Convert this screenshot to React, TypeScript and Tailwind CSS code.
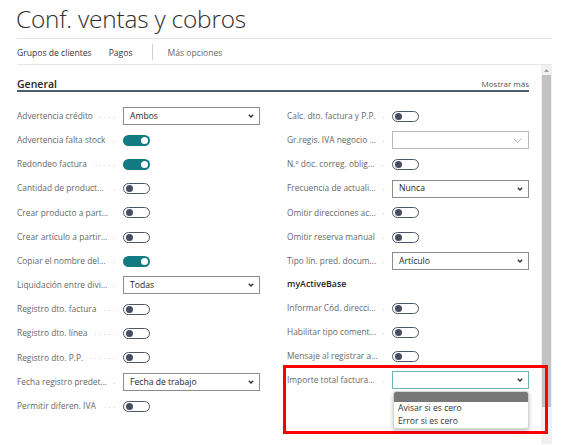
import React from "react";

type RowItem =
  | { kind: "toggle"; label: string; on?: boolean }
  | { kind: "select"; label: string; value: string; thin?: boolean }
  | { kind: "heading"; label: string }
  | { kind: "focus"; label: string };

const leftRows: RowItem[] = [
  { kind: "select", label: "Advertencia crédito", value: "Ambos" },
  { kind: "toggle", label: "Advertencia falta stock", on: true },
  { kind: "toggle", label: "Redondeo factura", on: true },
  { kind: "toggle", label: "Cantidad de product..." },
  { kind: "toggle", label: "Crear producto a part..." },
  { kind: "toggle", label: "Crear artículo a partir..." },
  { kind: "toggle", label: "Copiar el nombre del...", on: true },
  { kind: "select", label: "Liquidación entre divi...", value: "Todas" },
  { kind: "toggle", label: "Registro dto. factura" },
  { kind: "toggle", label: "Registro dto. línea" },
  { kind: "toggle", label: "Registro dto. P.P." },
  { kind: "select", label: "Fecha registro predet...", value: "Fecha de trabajo" },
  { kind: "toggle", label: "Permitir diferen. IVA" },
];

const rightRows: RowItem[] = [
  { kind: "toggle", label: "Calc. dto. factura y P.P." },
  { kind: "select", label: "Gr.regis. IVA negocio ...", value: "", thin: true },
  { kind: "toggle", label: "N.º doc. correg. oblig..." },
  { kind: "select", label: "Frecuencia de actuali...", value: "Nunca" },
  { kind: "toggle", label: "Omitir direcciones ac..." },
  { kind: "toggle", label: "Omitir reserva manual" },
  { kind: "select", label: "Tipo lín. pred. docum...", value: "Artículo" },
  { kind: "heading", label: "myActiveBase" },
  { kind: "toggle", label: "Informar Cód. direcci..." },
  { kind: "toggle", label: "Habilitar tipo coment..." },
  { kind: "toggle", label: "Mensaje al registrar a..." },
  { kind: "focus", label: "Importe total factura..." },
];

function Chevron({ thin }: { thin?: boolean }) {
  if (thin) {
    return (
      <svg width="9" height="5" viewBox="0 0 9 5" fill="none">
        <path d="M0.5 0.5 L4.5 4.5 L8.5 0.5" stroke="#a3a3a3" strokeWidth="0.8" />
      </svg>
    );
  }
  return (
    <svg width="6" height="4" viewBox="0 0 6 4" fill="none">
      <path d="M0.8 0.8 L3 3 L5.2 0.8" stroke="#303030" strokeWidth="1.4" />
    </svg>
  );
}

function Toggle({ on }: { on?: boolean }) {
  if (on) {
    return (
      <div className="flex h-[11px] w-[27px] items-center justify-end rounded-full bg-[#127b82] pr-[2px]">
        <div className="h-[7px] w-[7px] rounded-full bg-white" />
      </div>
    );
  }
  return (
    <div className="flex h-[11px] w-[27px] items-center rounded-full border border-[#4d5666] bg-white pl-[1.5px]">
      <div className="h-[7px] w-[7px] rounded-full bg-[#464f61]" />
    </div>
  );
}

function Select({ value, thin }: { value: string; thin?: boolean }) {
  return (
    <div
      className={`flex h-[18px] items-center justify-between border bg-white pl-[6px] text-[8.6px] text-[#262626] ${
        thin ? "border-[#b9b9b9] pr-[6px]" : "border-[#8c8c8c] pr-[5px]"
      }`}
    >
      <span>{value}</span>
      <Chevron thin={thin} />
    </div>
  );
}

function FocusSelect() {
  return (
    <div className="relative">
      <div className="flex h-[18px] items-center justify-end border border-[#6db3b9] bg-white pr-[5px]">
        <Chevron />
      </div>
      <div className="absolute left-[1px] right-0 top-[20px] z-10 overflow-hidden rounded-[3px] border border-[#d4d4d4] bg-white pb-[1px] shadow-[0_2px_4px_rgba(0,0,0,0.25)]">
        <div className="h-[10px] bg-[#777777]" />
        <div className="px-[4px] text-[8.6px] leading-[12.5px] text-[#333333]">Avisar si es cero</div>
        <div className="px-[4px] text-[8.6px] leading-[12.5px] text-[#333333]">Error si es cero</div>
      </div>
    </div>
  );
}

function Row({ item, h = "h-[24.2px]" }: { item: RowItem; h?: string }) {
  if (item.kind === "heading") {
    return (
      <div className={`flex ${h} items-center text-[8.8px] font-semibold text-[#262626]`}>
        {item.label}
      </div>
    );
  }
  return (
    <div className={`flex ${h} items-center`}>
      <span className="whitespace-nowrap text-[8.4px] text-[#686868]">{item.label}</span>
      <span className="ml-[6px] mr-[5px] h-px flex-1 translate-y-[1px] bg-[linear-gradient(to_right,#cacaca_1px,transparent_1px)] bg-[length:4.5px_1px] bg-right" />
      <div className="w-[137px] shrink-0">
        {item.kind === "toggle" && <Toggle on={item.on} />}
        {item.kind === "select" && <Select value={item.value} thin={item.thin} />}
        {item.kind === "focus" && <FocusSelect />}
      </div>
    </div>
  );
}

export default function App() {
  return (
    <div className="relative h-[445px] w-[567px] overflow-hidden bg-white font-['Open_Sans',sans-serif]">
      <div className="flex h-[38px] items-center pl-[16px] pt-[1px]">
        <h1 className="text-[24.4px] font-light leading-none tracking-[-0.2px] text-[#2e2e2e]">
          Conf. ventas y cobros
        </h1>
      </div>

      <div className="ml-[17px] w-[535px] border-t border-[#e2e2e2]">
        <nav className="flex h-[26px] items-center border-b border-[#e6e6e6] pt-[3px] text-[8.6px]">
          <span className="text-[#333333]">Grupos de clientes</span>
          <span className="ml-[17px] text-[#333333]">Pagos</span>
          <span className="ml-[19px] h-[16px] w-px -translate-y-[1px] bg-[#cfcfcf]" />
          <span className="ml-[15px] text-[#6a6a6a]">Más opciones</span>
        </nav>

        <div className="flex h-[379px]">
          <div className="w-[512px]">
            <div className="flex h-[27px] items-end justify-between border-b-2 border-[#4f5a6a]">
              <span className="text-[10.5px] font-semibold leading-[12px] text-[#262626]">General</span>
              <span className="text-[8px] leading-[12px] text-[#555555]">Mostrar más</span>
            </div>
            <div className="mt-[12px] grid grid-cols-[243px_242px] gap-x-[27px]">
              <div className="flex flex-col">
                {leftRows.map((r) => (
                  <Row key={r.label} item={r} />
                ))}
              </div>
              <div className="flex flex-col">
                {rightRows.map((r, i) => (
                  <Row key={r.label} item={r} h={i === 7 ? "h-[23.2px]" : i === 10 ? "h-[23.2px]" : "h-[24.2px]"} />
                ))}
              </div>
            </div>
          </div>

          <div className="ml-[12px] flex w-[11px] flex-col bg-[#f1f1f1]">
            <div className="flex h-[10px] items-center justify-center">
              <svg width="5" height="3" viewBox="0 0 5 3">
                <path d="M0 3 L2.5 0 L5 3 Z" fill="#a0a0a0" />
              </svg>
            </div>
            <div className="mx-auto h-[332px] w-[9px] bg-[#c2c2c2]" />
          </div>
        </div>
      </div>

      <div className="pointer-events-none absolute left-[283px] top-[365px] h-[69px] w-[265px] border-[3px] border-[#ff0000]" />
    </div>
  );
}
